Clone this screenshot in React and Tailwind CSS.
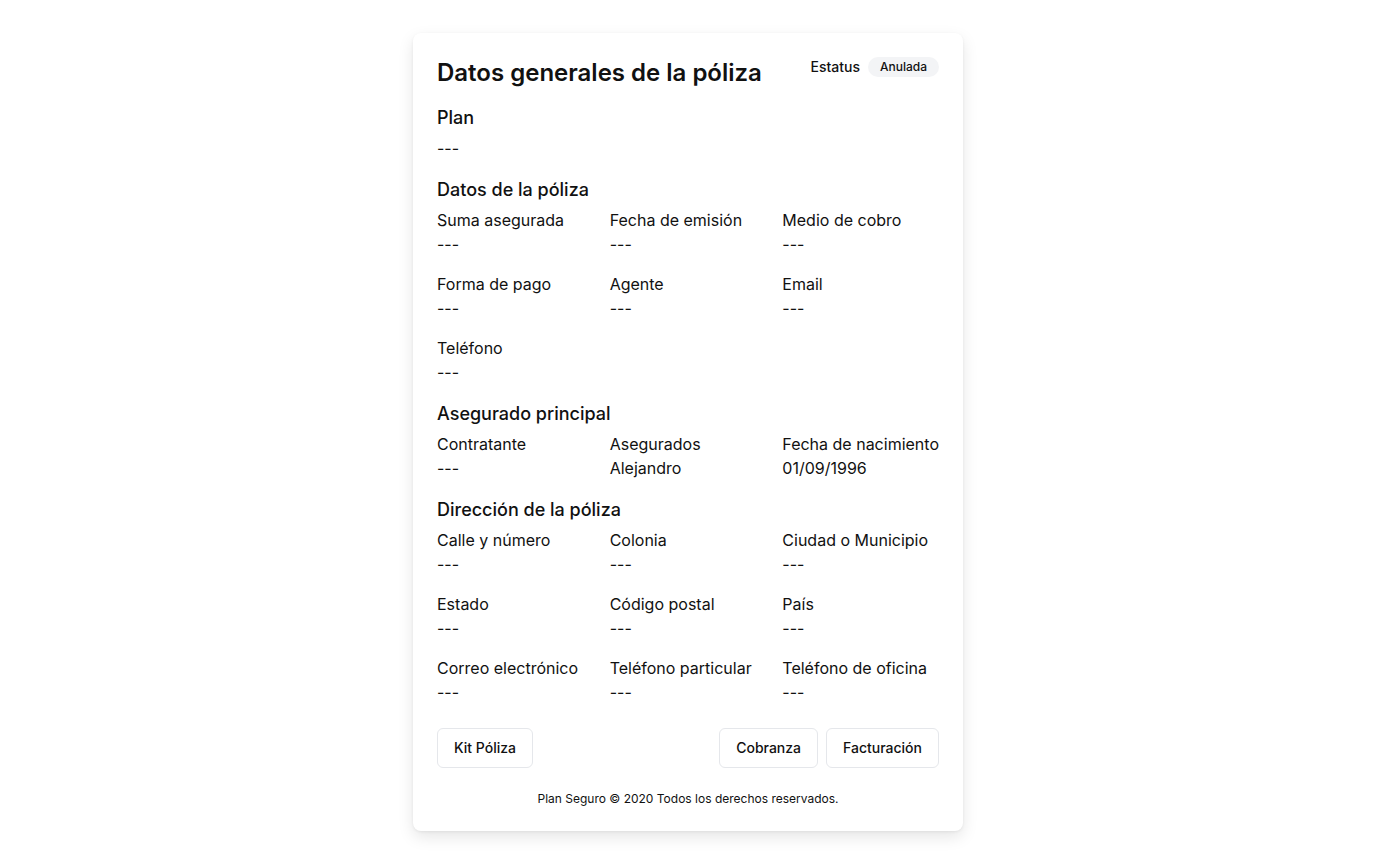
import React from 'react';

const Field = ({ label, value = '---' }) => (
    <div className="flex flex-col">
        <span className="text-base leading-6">{label}</span>
        <span className="text-base leading-6">{value}</span>
    </div>
);

const Section = ({ title, children }) => (
    <div className="flex flex-col gap-1">
        <h3 className="text-lg leading-7 font-medium">{title}</h3>
        <div className="grid grid-cols-3 gap-4">{children}</div>
    </div>
);

const App = () => {
    return (
        <div className="min-h-screen bg-white flex justify-center pt-[33px] text-[#111111]" style={{ fontFamily: 'Inter, "Noto Sans", sans-serif' }}>
            <div className="w-[550px] h-fit bg-white rounded-lg shadow-[0_6px_16px_rgba(0,0,0,0.10),0_1px_3px_rgba(0,0,0,0.06)] p-6 flex flex-col">
                <div className="flex items-start justify-between">
                    <h1 className="text-2xl leading-8 font-semibold">Datos generales de la póliza</h1>
                    <div className="flex items-center gap-2">
                        <span className="text-sm font-medium">Estatus</span>
                        <span className="text-xs font-medium bg-gray-100 rounded-full px-3 py-[2px]">Anulada</span>
                    </div>
                </div>

                <div className="flex flex-col gap-1 mt-[15px]">
                    <h3 className="text-lg leading-7 font-medium">Plan</h3>
                    <span className="text-base leading-6">---</span>
                </div>

                <div className="flex flex-col gap-4 mt-4">
                    <Section title="Datos de la póliza">
                        <Field label="Suma asegurada" />
                        <Field label="Fecha de emisión" />
                        <Field label="Medio de cobro" />
                        <Field label="Forma de pago" />
                        <Field label="Agente" />
                        <Field label="Email" />
                        <Field label="Teléfono" />
                    </Section>
                    <Section title="Asegurado principal">
                        <Field label="Contratante" />
                        <Field label="Asegurados" value="Alejandro" />
                        <Field label="Fecha de nacimiento" value="01/09/1996" />
                    </Section>
                    <Section title="Dirección de la póliza">
                        <Field label="Calle y número" />
                        <Field label="Colonia" />
                        <Field label="Ciudad o Municipio" />
                        <Field label="Estado" />
                        <Field label="Código postal" />
                        <Field label="País" />
                        <Field label="Correo electrónico" />
                        <Field label="Teléfono particular" />
                        <Field label="Teléfono de oficina" />
                    </Section>
                </div>

                <div className="flex items-center justify-between mt-6">
                    <button className="h-10 px-4 border border-gray-200 rounded-md text-sm font-medium">Kit Póliza</button>
                    <div className="flex items-center gap-2">
                        <button className="h-10 px-4 border border-gray-200 rounded-md text-sm font-medium">Cobranza</button>
                        <button className="h-10 px-4 border border-gray-200 rounded-md text-sm font-medium">Facturación</button>
                    </div>
                </div>

                <p className="text-xs leading-4 text-center mt-[23px]">Plan Seguro © 2020 Todos los derechos reservados.</p>
            </div>
        </div>
    );
};

export default App;
